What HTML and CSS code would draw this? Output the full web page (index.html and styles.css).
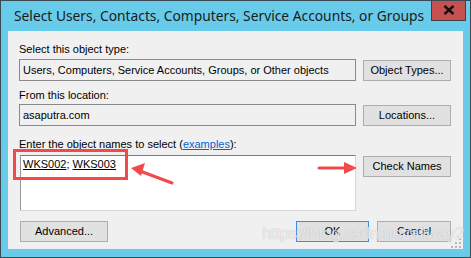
FILE: index.html
```html
<!DOCTYPE html>
<html>
<head>
<meta charset="utf-8">
<link rel="stylesheet" href="styles.css">
</head>
<body>
<div class="window">
  <div class="titlebar">
    <div class="title">Select Users, Contacts, Computers, Service Accounts, or Groups</div>
    <div class="close"><svg width="12" height="10" viewBox="0 0 12 10"><path d="M1.5 1 L10.5 9 M10.5 1 L1.5 9" stroke="#111" stroke-width="2.4"/></svg></div>
  </div>
  <div class="content">
    <div class="label l1">Select this object type:</div>
    <div class="row">
      <div class="field">Users, Computers, Service Accounts, Groups, or Other objects</div>
      <div class="btn side">Object Types...</div>
    </div>
    <div class="label l2">From this location:</div>
    <div class="row">
      <div class="field">asaputra.com</div>
      <div class="btn side">Locations...</div>
    </div>
    <div class="label l3">Enter the object names to select (<span class="link">examples</span>):</div>
    <div class="row top">
      <div class="names"><span class="u">WKS002</span>; <span class="u">WKS003</span></div>
      <div class="btn side check">Check Names</div>
    </div>
    <div class="footer">
      <div class="btn adv">Advanced...</div>
      <div class="spacer"></div>
      <div class="btn ok">OK</div>
      <div class="btn cancel">Cancel</div>
    </div>
    <svg class="grip" width="10" height="10" viewBox="0 0 10 10">
      <rect x="8" y="0" width="2" height="2" fill="#b8b8b8"/>
      <rect x="4" y="4" width="2" height="2" fill="#b8b8b8"/>
      <rect x="8" y="4" width="2" height="2" fill="#b8b8b8"/>
      <rect x="0" y="8" width="2" height="2" fill="#b8b8b8"/>
      <rect x="4" y="8" width="2" height="2" fill="#b8b8b8"/>
      <rect x="8" y="8" width="2" height="2" fill="#b8b8b8"/>
    </svg>
  </div>
  <svg class="annot" width="471" height="258" viewBox="0 0 471 258">
    <rect x="14.5" y="150.5" width="112" height="28" fill="none" stroke="#f04a4a" stroke-width="3"/>
    <path d="M172 183 L140 171" stroke="#f04a4a" stroke-width="3" stroke-linecap="round"/>
    <path d="M131 168 L145 163 L141 176 Z" fill="#f04a4a"/>
    <path d="M319 168 L346 168" stroke="#f04a4a" stroke-width="3" stroke-linecap="round"/>
    <path d="M357 168 L344 162 L344 174 Z" fill="#f04a4a"/>
  </svg>
  <div class="watermark">https://blog.csdn.net/allway2</div>
</div>
</body>
</html>
```
FILE: styles.css
```css
html, body {
  margin: 0;
  padding: 0;
  background: #ffffff;
}
.window {
  position: relative;
  width: 471px;
  height: 258px;
  box-sizing: border-box;
  border: 1px solid #3b4a52;
  background: #67cbe9;
  display: flex;
  flex-direction: column;
  overflow: hidden;
}
.titlebar {
  height: 30px;
  display: flex;
  align-items: flex-start;
  flex-shrink: 0;
}
.title {
  flex: 1;
  min-width: 0;
  padding-left: 13px;
  padding-top: 5px;
  font-family: "Noto Sans", sans-serif;
  font-size: 13.8px;
  line-height: 20px;
  color: #1b1b1b;
  white-space: nowrap;
}
.close {
  flex-shrink: 0;
  width: 33px;
  height: 20px;
  margin-top: -1px;
  margin-right: 4px;
  background: #c75050;
  border: 1px solid #404040;
  border-top: none;
  display: flex;
  align-items: center;
  justify-content: center;
}
.content {
  position: relative;
  margin: 0 7px 8px 7px;
  flex: 1;
  background: #f0f0f0;
  padding: 0 12px 0 11px;
  font-family: "Liberation Sans", Arial, sans-serif;
  font-size: 11px;
  color: #000;
  display: flex;
  flex-direction: column;
}
.label {
  line-height: 13px;
  height: 13px;
  white-space: nowrap;
}
.l1 { margin-top: 12px; margin-bottom: 3px; }
.l2 { margin-top: 8px; margin-bottom: 2px; }
.l3 { margin-top: 12px; margin-bottom: 4px; }
.link {
  color: #0066cc;
  text-decoration: underline;
}
.row {
  display: flex;
  gap: 7px;
  align-items: center;
}
.row.top { align-items: flex-start; }
.field {
  width: 337px;
  height: 22px;
  box-sizing: border-box;
  border: 1px solid #8a8a8a;
  background: #f0f0f0;
  padding-left: 3px;
  line-height: 20px;
  white-space: nowrap;
  overflow: hidden;
}
.names {
  width: 336px;
  margin-left: 1px;
  height: 56px;
  box-sizing: border-box;
  background: #fff;
  border: 1px solid #d6d6d6;
  border-top-color: #7a7a7a;
  border-left-color: #9a9a9a;
  padding: 2px 0 0 2px;
  line-height: 13px;
  white-space: nowrap;
}
.u { text-decoration: underline; }
.btn {
  height: 21px;
  box-sizing: border-box;
  border: 1px solid #adadad;
  background: #e1e1e1;
  display: flex;
  align-items: center;
  justify-content: center;
  white-space: nowrap;
  line-height: 13px;
}
.side { width: 88px; }
.check { margin-top: 1px; }
.footer {
  display: flex;
  margin-top: 10px;
  margin-left: 1px;
}
.adv { width: 88px; }
.spacer { flex: 1; }
.ok {
  width: 73px;
  border-color: #3c8fe0;
  margin-right: 8px;
}
.cancel { width: 74px; }
.grip {
  position: absolute;
  right: 2px;
  bottom: 1px;
}
.annot {
  position: absolute;
  left: -1px;
  top: -1px;
  pointer-events: none;
}
.watermark {
  position: absolute;
  left: 261px;
  top: 223px;
  font-family: "Liberation Sans", Arial, sans-serif;
  font-size: 17px;
  letter-spacing: -0.4px;
  color: rgba(255, 255, 255, 0.7);
  text-shadow: 0 0 1px rgba(120, 120, 120, 0.5);
  white-space: nowrap;
  pointer-events: none;
}
```
